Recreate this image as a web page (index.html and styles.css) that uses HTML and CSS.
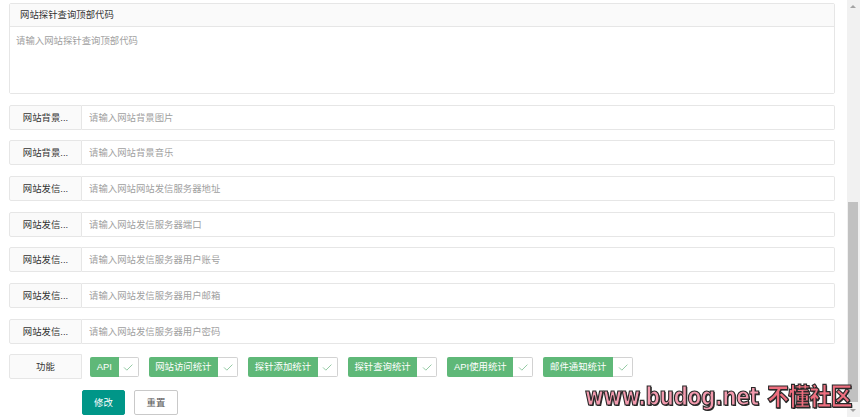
FILE: index.html
```html
<!DOCTYPE html>
<html lang="zh-CN">
<head>
  <meta charset="UTF-8">
  <meta name="viewport" content="width=device-width, initial-scale=1.0">
  <title>网站设置</title>
  <link rel="stylesheet" href="styles.css">
</head>
<body>
  <div class="page">
    <form class="form-pane">
      <div class="item-text">
        <label class="text-label">网站探针查询顶部代码</label>
        <textarea class="textarea" placeholder="请输入网站探针查询顶部代码"></textarea>
      </div>

      <div class="item">
        <label class="label">网站背景...</label>
        <input class="input" type="text" placeholder="请输入网站背景图片">
      </div>
      <div class="item">
        <label class="label">网站背景...</label>
        <input class="input" type="text" placeholder="请输入网站背景音乐">
      </div>
      <div class="item">
        <label class="label">网站发信...</label>
        <input class="input" type="text" placeholder="请输入网站网站发信服务器地址">
      </div>
      <div class="item">
        <label class="label">网站发信...</label>
        <input class="input" type="text" placeholder="请输入网站发信服务器端口">
      </div>
      <div class="item">
        <label class="label">网站发信...</label>
        <input class="input" type="text" placeholder="请输入网站发信服务器用户账号">
      </div>
      <div class="item">
        <label class="label">网站发信...</label>
        <input class="input" type="text" placeholder="请输入网站发信服务器用户邮箱">
      </div>
      <div class="item">
        <label class="label">网站发信...</label>
        <input class="input" type="password" placeholder="请输入网站发信服务器用户密码">
      </div>

      <div class="item">
        <label class="label">功能</label>
        <div class="checks">
          <div class="checkbox"><span>API</span><i><svg viewBox="0 0 20 20"><path d="M5 10.5l3.5 3.5 7-7"/></svg></i></div>
          <div class="checkbox"><span>网站访问统计</span><i><svg viewBox="0 0 20 20"><path d="M5 10.5l3.5 3.5 7-7"/></svg></i></div>
          <div class="checkbox"><span>探针添加统计</span><i><svg viewBox="0 0 20 20"><path d="M5 10.5l3.5 3.5 7-7"/></svg></i></div>
          <div class="checkbox"><span>探针查询统计</span><i><svg viewBox="0 0 20 20"><path d="M5 10.5l3.5 3.5 7-7"/></svg></i></div>
          <div class="checkbox"><span>API使用统计</span><i><svg viewBox="0 0 20 20"><path d="M5 10.5l3.5 3.5 7-7"/></svg></i></div>
          <div class="checkbox"><span>邮件通知统计</span><i><svg viewBox="0 0 20 20"><path d="M5 10.5l3.5 3.5 7-7"/></svg></i></div>
        </div>
      </div>

      <div class="buttons">
        <button type="button" class="btn btn-submit">修改</button>
        <button type="reset" class="btn">重置</button>
      </div>
    </form>
  </div>

  <!-- fake scrollbar -->
  <div class="scrollbar">
    <div class="arrow arrow-up"></div>
    <div class="thumb"></div>
    <div class="arrow arrow-down"></div>
  </div>

  <div class="watermark">www.budog.net <b>不懂社区</b></div>
</body>
</html>
```

FILE: styles.css
```css
html, body {
  margin: 0;
  height: 100%;
  overflow: hidden;
}

body {
  font-family: "Helvetica Neue", "Liberation Sans", "Noto Sans CJK SC", sans-serif;
  font-size: 9.4px;
  color: #333;
  background: #fff;
}

.page {
  padding: 3px 25px 0 9px;
}

.form-pane {
  display: flex;
  flex-direction: column;
  gap: 10.67px;
}

.item-text {
  display: flex;
  flex-direction: column;
  border: 1px solid #e6e6e6;
  border-radius: 2px;
}

.text-label {
  height: 22px;
  line-height: 22px;
  padding: 0 10px;
  background-color: #fafafa;
  border-bottom: 1px solid #e6e6e6;
}

.textarea {
  height: 66px;
  border: none;
  padding: 6px 6px;
  resize: none;
  font: inherit;
  outline: none;
  box-sizing: border-box;
}

.item {
  display: flex;
  height: 25px;
}

.label {
  width: 73px;
  flex: none;
  box-sizing: border-box;
  border: 1px solid #e6e6e6;
  border-radius: 2px 0 0 2px;
  background-color: #fafafa;
  text-align: center;
  line-height: 23px;
}

.input {
  flex: 1;
  min-width: 0;
  height: 25px;
  box-sizing: border-box;
  border: 1px solid #e6e6e6;
  border-left: none;
  border-radius: 0 2px 2px 0;
  padding: 0 7px;
  font: inherit;
  outline: none;
}

::placeholder {
  color: #a0a0a0;
}

.checks {
  display: flex;
  align-items: center;
  gap: 10px;
  padding-left: 8px;
}

.checkbox {
  display: flex;
  height: 20px;
}

.checkbox span {
  padding: 0 6.7px;
  line-height: 20px;
  background-color: #5fb878;
  color: #fff;
  border-radius: 2px 0 0 2px;
}

.checkbox i {
  width: 20px;
  height: 20px;
  box-sizing: border-box;
  border: 1px solid #d2d2d2;
  border-left: none;
  border-radius: 0 2px 2px 0;
  display: flex;
  align-items: center;
  justify-content: center;
}

.checkbox svg {
  width: 16px;
  height: 16px;
  fill: none;
  stroke: #8fc9a0;
  stroke-width: 1.2;
}

.buttons {
  display: flex;
  gap: 9px;
  padding-left: 73px;
}

.btn {
  width: 44px;
  height: 25px;
  padding: 0;
  border: 1px solid #c9c9c9;
  border-radius: 2px;
  background-color: #fff;
  color: #555;
  font: inherit;
  white-space: nowrap;
  cursor: pointer;
}

.btn-submit {
  width: 43px;
  background-color: #009688;
  border-color: #009688;
  color: #fff;
}

.scrollbar {
  position: fixed;
  top: 0;
  right: 0;
  width: 13px;
  height: 417px;
  background-color: #f1f1f1;
}

.thumb {
  position: absolute;
  left: 1px;
  right: 2px;
  top: 202px;
  height: 200px;
  background-color: #c1c1c1;
}

.arrow {
  position: absolute;
  left: 3px;
  width: 0;
  height: 0;
  border-left: 3.5px solid transparent;
  border-right: 3.5px solid transparent;
}

.arrow-up {
  top: 5px;
  border-bottom: 3.5px solid #a3a3a3;
}

.arrow-down {
  bottom: 5px;
  border-top: 3.5px solid #a3a3a3;
}

.watermark {
  position: absolute;
  left: 585px;
  top: 377px;
  transform: scaleX(0.9);
  transform-origin: left top;
  font-family: "DejaVu Sans Condensed", "DejaVu Sans", "Noto Sans CJK SC", sans-serif;
  font-weight: bold;
  font-size: 25px;
  letter-spacing: -0.5px;
  color: #f39aae;
  -webkit-text-stroke: 1.2px #2a2a2a;
  text-shadow: 1px 1px 0 #2a2a2a;
  white-space: nowrap;
}

.watermark b {
  font-family: "Noto Sans CJK SC", sans-serif;
  font-weight: 900;
  font-size: 24px;
  color: #ee6f7f;
  margin-left: 2px;
}
```
